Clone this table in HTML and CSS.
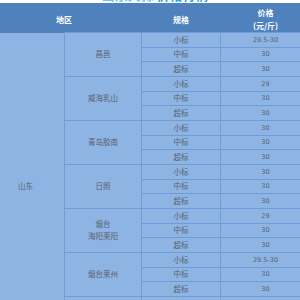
FILE: index.html
```html
<!DOCTYPE html>
<html lang="zh">
<head>
<meta charset="utf-8">
<link rel="stylesheet" href="styles.css">
</head>
<body>
<div class="page">
  <div class="title"><span class="t1">山东大蒜</span> <span class="t2">价格行情</span></div>
  <table class="price">
    <colgroup><col class="c1"><col class="c2"><col class="c3"><col class="c4"></colgroup>
    <thead>
      <tr>
        <th colspan="2">地区</th>
        <th>规格</th>
        <th>价格<br>(元/斤)</th>
      </tr>
    </thead>
    <tbody>
      <tr><td rowspan="21" class="prov">山东</td><td rowspan="3">昌邑</td><td>小标</td><td class="num">29.5-30</td></tr>
      <tr><td>中标</td><td class="num">30</td></tr>
      <tr><td>超标</td><td class="num">30</td></tr>
      <tr><td rowspan="3">威海乳山</td><td>小标</td><td class="num">29</td></tr>
      <tr><td>中标</td><td class="num">30</td></tr>
      <tr><td>超标</td><td class="num">30</td></tr>
      <tr><td rowspan="3">青岛胶南</td><td>小标</td><td class="num">30</td></tr>
      <tr><td>中标</td><td class="num">30</td></tr>
      <tr><td>超标</td><td class="num">30</td></tr>
      <tr><td rowspan="3">日照</td><td>小标</td><td class="num">30</td></tr>
      <tr><td>中标</td><td class="num">30</td></tr>
      <tr><td>超标</td><td class="num">30</td></tr>
      <tr><td rowspan="3">烟台<br>海阳莱阳</td><td>小标</td><td class="num">29</td></tr>
      <tr><td>中标</td><td class="num">30</td></tr>
      <tr><td>超标</td><td class="num">30</td></tr>
      <tr><td rowspan="3">烟台莱州</td><td>小标</td><td class="num">29.5-30</td></tr>
      <tr><td>中标</td><td class="num">30</td></tr>
      <tr><td>超标</td><td class="num">30</td></tr>
      <tr><td rowspan="3">烟台招远</td><td>小标</td><td class="num">29.5-30</td></tr>
      <tr><td>中标</td><td class="num">30</td></tr>
      <tr><td>超标</td><td class="num">30</td></tr>
    </tbody>
  </table>
</div>
</body>
</html>
```
FILE: styles.css
```css
html, body {
  margin: 0;
  padding: 0;
  background: #ffffff;
}
body {
  font-family: "Noto Sans CJK SC", "Liberation Sans", sans-serif;
}
.page {
  margin-left: -14px;
  width: 324px;
}
.title {
  height: 3px;
  overflow: hidden;
  text-align: center;
  font-size: 13px;
  line-height: 3px;
  font-weight: bold;
  padding-left: 14px;
  box-sizing: border-box;
}
.title span {
  display: inline-block;
  margin-top: -12px;
  line-height: 13px;
  vertical-align: top;
}
.t1 { color: #6cc3ee; }
.t2 { color: #2ea3de; }
.price {
  border-collapse: collapse;
  table-layout: fixed;
  width: 324px;
}
.c1 { width: 78px; }
.c2 { width: 77px; }
.c3 { width: 79px; }
.c4 { width: 90px; }
.price th {
  background: #4f81bd;
  color: #ffffff;
  font-size: 8px;
  font-weight: 600;
  line-height: 13px;
  height: 28px;
  padding: 3px 0 0 0;
  border: none;
  box-sizing: border-box;
  text-align: center;
}
.price td {
  background: #8db4e2;
  color: #5a6270;
  font-size: 7.5px;
  line-height: 12px;
  height: 14.667px;
  padding: 0;
  border: 1px solid #6f9bd6;
  text-align: center;
  box-sizing: border-box;
}
.price td.num {
  font-family: "DejaVu Sans", sans-serif;
  font-size: 6.5px;
}
.price td.prov {
  border-top: none;
}
```
